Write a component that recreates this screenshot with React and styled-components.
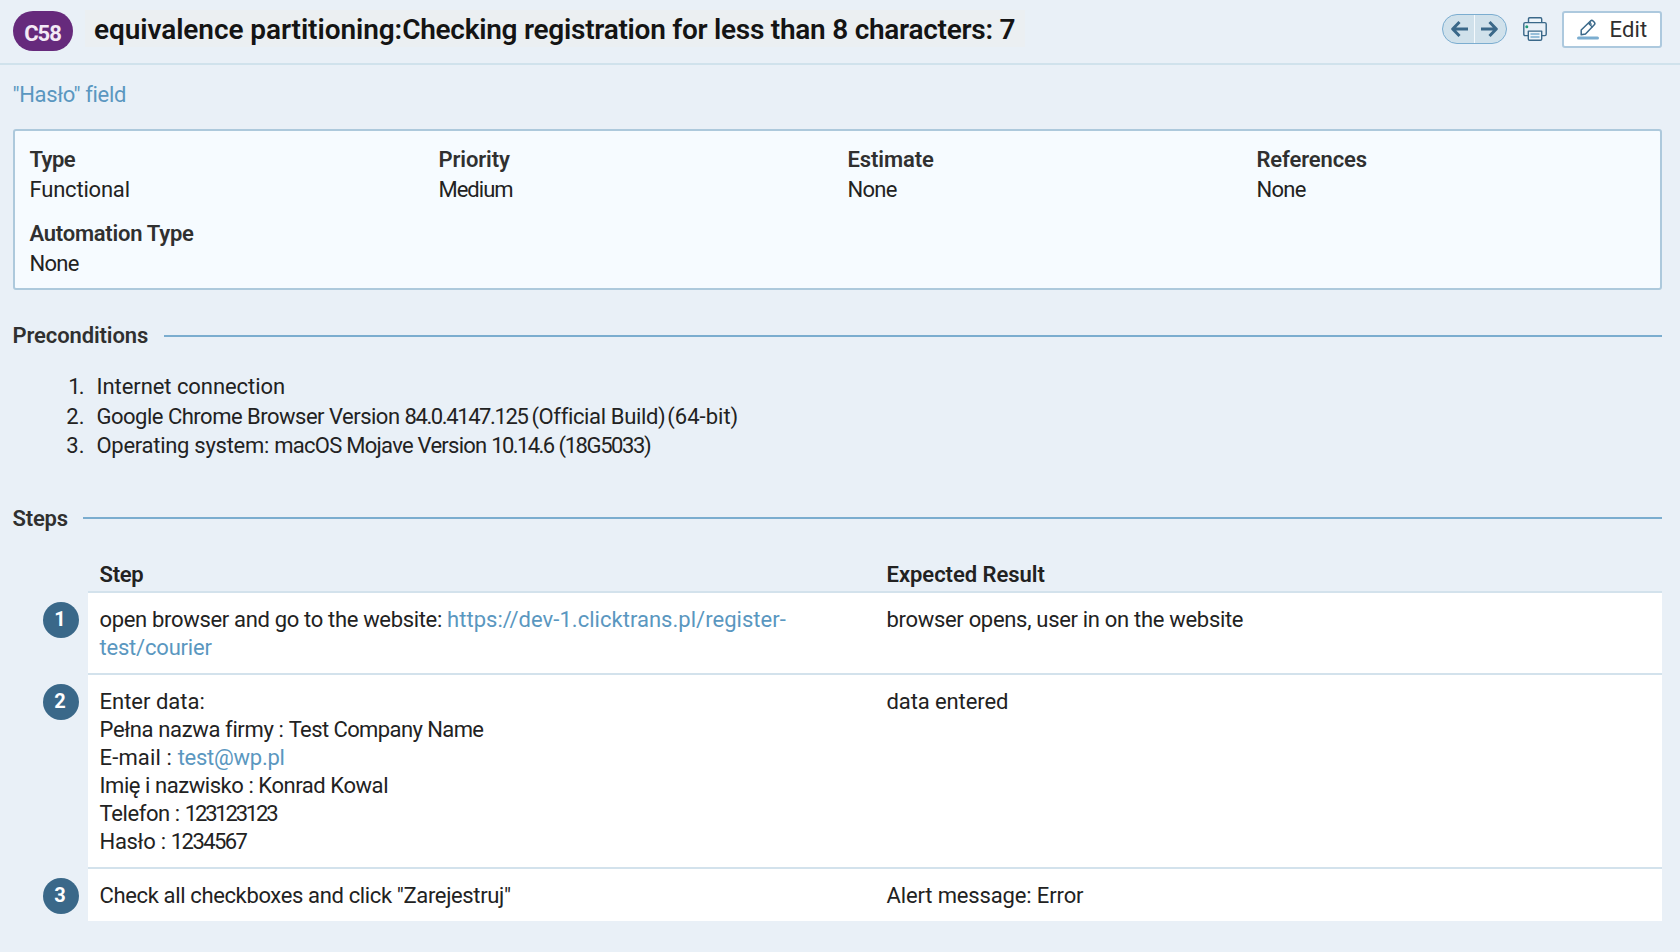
import React from 'react';
import styled, { createGlobalStyle } from 'styled-components';

const GlobalStyle = createGlobalStyle`
  *, *::before, *::after { box-sizing: border-box; }
  body {
    margin: 0;
    min-height: 952px;
    background: #e9f0f7;
    color: #222;
    font: 400 22px/28px Roboto, "Liberation Sans", sans-serif;
    overflow: hidden;
  }
`;

const Header = styled.header`
  display: flex;
  align-items: flex-start;
  height: 65px;
  padding: 0 18px 0 13px;
  border-bottom: 2px solid #d0e2ec;
`;

const CaseBadge = styled.span`
  display: flex;
  justify-content: center;
  width: 60px;
  height: 40px;
  margin-top: 11px;
  padding-right: 1px;
  border-radius: 20px;
  background: #662a7c;
  color: #f3eaf6;
  font-weight: 700;
  line-height: 45px;
  letter-spacing: -1.1px;
`;

const Title = styled.h1`
  width: 940px;
  height: 37px;
  margin: 10px auto 0 12px;
  padding-left: 9px;
  background: #ebeff2;
  color: #141414;
  font-size: 28px;
  font-weight: 600;
  line-height: 39px;
  white-space: nowrap;
`;

const Toolbar = styled.div`
  display: flex;
  align-items: flex-start;
  height: 37px;
  margin-top: 11px;
`;

const Pager = styled.div`
  display: flex;
  width: 65px;
  height: 30px;
  margin: 3px 16px 0 0;
  overflow: hidden;
  border: 1.5px solid #7badd0;
  border-radius: 15px;
  background: #d0e1eb;
`;

const PagerButton = styled.button`
  display: flex;
  flex: 1;
  align-items: center;
  justify-content: ${(p) => (p.$side === 'left' ? 'flex-end' : 'flex-start')};
  padding: 0 5px;
  border: 0;
  border-right: ${(p) => (p.$side === 'left' ? '1px solid #f5fafd' : '0')};
  background: none;
`;

const PrintButton = styled.button`
  display: flex;
  margin-top: 6px;
  padding: 0;
  border: 0;
  background: none;
`;

const EditButton = styled.button`
  display: flex;
  align-items: center;
  width: 100px;
  height: 37px;
  margin-left: 15px;
  padding: 0 0 0 13px;
  border: 2px solid #adc9de;
  border-radius: 3px;
  background: #fff;
  color: #2f2f2f;
  font: inherit;
  letter-spacing: 0.15px;

  svg { margin-right: 10.5px; }
`;

const Content = styled.main`
  padding: 0 18px 0 12.5px;
`;

const Link = styled.a`
  color: #5a97c0;
  letter-spacing: ${(p) => p.$track || 0}px;
`;

const Breadcrumb = styled.nav`
  padding: 16px 0 20px;
`;

const Panel = styled.section`
  display: grid;
  grid-template-columns: repeat(4, 409px);
  align-content: start;
  row-gap: 14px;
  height: 161px;
  margin-left: 0.5px;
  padding: 14px 0 0 14.5px;
  border: 2px solid #adc9dc;
  border-radius: 3px;
  background: #f6fbff;
  line-height: 30px;
`;

const Label = styled.div`
  color: #303030;
  font-weight: 600;
  letter-spacing: ${(p) => p.$track}px;
`;

const Value = styled.div`
  letter-spacing: ${(p) => p.$track}px;
`;

const SectionTitle = styled.h2`
  display: flex;
  align-items: center;
  gap: 15.5px;
  height: 30px;
  margin: ${(p) => p.$top}px 0 0;
  color: #303030;
  font-size: 22px;
  font-weight: 600;
  line-height: 28px;
  letter-spacing: ${(p) => p.$track}px;

  &::after {
    content: "";
    flex: 1;
    height: 2px;
    margin-bottom: ${(p) => p.$lift || 0}px;
    background: #7badcf;
  }
`;

const Conditions = styled.ol`
  margin: 21px 0 0;
  padding: 0;
  list-style: none;
  line-height: 29.5px;
`;

const Condition = styled.li`
  display: grid;
  grid-template-columns: 72px auto;
  column-gap: 12px;
  white-space: nowrap;
`;

const Ordinal = styled.span`
  text-align: right;
`;

const Run = styled.span`
  letter-spacing: ${(p) => p.$track || 0}px;
  margin-left: ${(p) => p.$shift || 0}px;
`;

const Table = styled.div`
  display: grid;
  grid-template-columns: 45px 1fr;
  margin: 27px 0 0 30.5px;
`;

const Columns = styled.div`
  display: grid;
  grid-template-columns: 1fr 1fr;
  padding: 13px 0 11px;
  border-top: 2px solid #d3e2ec;
  background: #fff;
`;

const TableHead = styled(Columns)`
  grid-column: 2;
  height: 30px;
  padding: 0;
  border: 0;
  background: none;
  font-weight: 600;
`;

const Cell = styled.div`
  padding: 0 12px 0 11.5px;
  letter-spacing: ${(p) => p.$track || 0}px;
`;

const Line = styled.div`
  white-space: nowrap;
`;

const StepNumber = styled.div`
  width: 36px;
  height: 36px;
  margin-top: 11px;
  padding-right: 2px;
  border-radius: 50%;
  background: #3a6889;
  color: #fff;
  font-size: 20px;
  font-weight: 700;
  line-height: 34px;
  text-align: center;
`;

const Arrow = ({ flip }) => (
  <svg width="18" height="18" viewBox="0 0 18 18" fill="none" stroke="#3a6889" strokeWidth="3">
    <path d={flip ? 'M1 9h14.5M9.5 2l6.8 7-6.8 7' : 'M17 9H2.5M8.5 2 1.7 9l6.8 7'} strokeLinejoin="round" />
  </svg>
);

const Printer = () => (
  <svg width="24" height="24" viewBox="0 0 24 24" fill="none" stroke="#3a6889" strokeWidth="1.4" strokeLinejoin="round">
    <path d="M5.5 5.5V2q0-1.2 1.2-1.2h10.8q1.2 0 1.2 1.2v3.5" fill="#eef5fa" />
    <path d="M5 18.6H2.2Q.8 18.6.8 17.2V7q0-1.4 1.4-1.4h19.6q1.4 0 1.4 1.4v10.2q0 1.4-1.4 1.4H19" />
    <path d="M5.3 14.1h13.4v7.8q0 1.3-1.3 1.3H6.6q-1.3 0-1.3-1.3z" fill="#eef5fa" />
    <path d="M7.5 17h9M7.5 20h9" stroke="#7badcf" />
    <circle cx="3.8" cy="9.7" r="1.5" fill="#1e9c77" stroke="none" />
  </svg>
);

const Pencil = () => (
  <svg width="22" height="22" viewBox="0 0 22 22" fill="none" stroke="#3a6889" strokeWidth="1.5" strokeLinejoin="round">
    <path d="M4.2 15.8V11L13.5 2q1.3-1.2 2.6 0l1.2 1.3q1.2 1.3 0 2.5L8.5 15z" />
    <path d="M11.4 4.2l4.100 4M13.5 2.800l-.8 2.500 2.300-.3" strokeWidth="1.2" />
    <path d="M1.500 19h19" stroke="#7badd0" strokeWidth="3" strokeLinecap="round" />
  </svg>
);

const fields = [
  { label: 'Type', lt: -0.6, value: 'Functional', vt: -0.2 },
  { label: 'Priority', lt: -0.1, value: 'Medium', vt: -1 },
  { label: 'Estimate', lt: -0.08, value: 'None', vt: -0.7 },
  { label: 'References', lt: -0.12, value: 'None', vt: -0.7 },
  { label: 'Automation Type', lt: -0.25, value: 'None', vt: -0.7 },
];

export default function App() {
  return (
    <>
      <GlobalStyle />
      <Header>
        <CaseBadge>C58</CaseBadge>
        <Title>
          <Run $track={-0.08}>equivalence partitioning:</Run>
          <Run $track={-0.26}>Checking registration for less than 8 characters: 7</Run>
        </Title>
        <Toolbar>
          <Pager>
            <PagerButton $side="left" aria-label="Previous"><Arrow /></PagerButton>
            <PagerButton $side="right" aria-label="Next"><Arrow flip /></PagerButton>
          </Pager>
          <PrintButton aria-label="Print"><Printer /></PrintButton>
          <EditButton><Pencil />Edit</EditButton>
        </Toolbar>
      </Header>
      <Content>
        <Breadcrumb><Link $track={-0.35}>"Hasło" field</Link></Breadcrumb>
        <Panel>
          {fields.map((f) => (
            <div key={f.label}>
              <Label $track={f.lt}>{f.label}</Label>
              <Value $track={f.vt}>{f.value}</Value>
            </div>
          ))}
        </Panel>

        <SectionTitle $top={31} $track={-0.12}>Preconditions</SectionTitle>
        <Conditions>
          <Condition>
            <Ordinal><Run $track={-2}>1</Run>.</Ordinal>
            <Run $track={-0.06}>Internet connection</Run>
          </Condition>
          <Condition>
            <Ordinal>2.</Ordinal>
            <span>
              <Run $track={-0.5}>Google Chrome Browser Version </Run>
              <Run $track={-1.4}>84.0.4147.125</Run>
              <Run $track={-0.35} $shift={4}>(Official Build)</Run>
              <Run $shift={2}>(64-bit)</Run>
            </span>
          </Condition>
          <Condition>
            <Ordinal>3.</Ordinal>
            <span>
              <Run $track={-0.28}>Operating system: </Run>
              <Run $track={-0.73}>macOS Mojave Version </Run>
              <Run $track={-1.6}>10.14.6</Run>
              <Run $track={-1.4} $shift={5}>(18G5033)</Run>
            </span>
          </Condition>
        </Conditions>

        <SectionTitle $top={43} $track={-0.2} $lift={2}>Steps</SectionTitle>
        <Table>
          <TableHead>
            <Cell $track={-0.3}>Step</Cell>
            <Cell $track={-0.03}>Expected Result</Cell>
          </TableHead>

          <StepNumber>1</StepNumber>
          <Columns>
            <Cell>
              <Run $track={-0.33}>open browser and go to the website: </Run>
              <Link $track={0.03}>https://dev-1.clicktrans.pl/register-<br /><Run $track={-0.2}>test/courier</Run></Link>
            </Cell>
            <Cell $track={-0.31}>browser opens, user in on the website</Cell>
          </Columns>

          <StepNumber>2</StepNumber>
          <Columns>
            <Cell>
              <Line>Enter data:</Line>
              <Line><Run $track={-0.36}>Pełna nazwa firmy : </Run><Run $track={-0.59}>Test Company Name</Run></Line>
              <Line><Run $track={0.15}>E-mail : </Run><Link $track={-0.25}>test@wp.pl</Link></Line>
              <Line><Run $track={-0.44}>Imię i nazwisko : Konrad Kowal</Run></Line>
              <Line><Run $track={-0.4}>Telefon : </Run><Run $track={-2.2}>123123123</Run></Line>
              <Line><Run $track={-0.3}>Hasło : </Run><Run $track={-1.6}>1234567</Run></Line>
            </Cell>
            <Cell $track={-0.1}>data entered</Cell>
          </Columns>

          <StepNumber>3</StepNumber>
          <Columns>
            <Cell $track={-0.36}>Check all checkboxes and click "Zarejestruj"</Cell>
            <Cell $track={-0.14}>Alert message: Error</Cell>
          </Columns>
        </Table>
      </Content>
    </>
  );
}
